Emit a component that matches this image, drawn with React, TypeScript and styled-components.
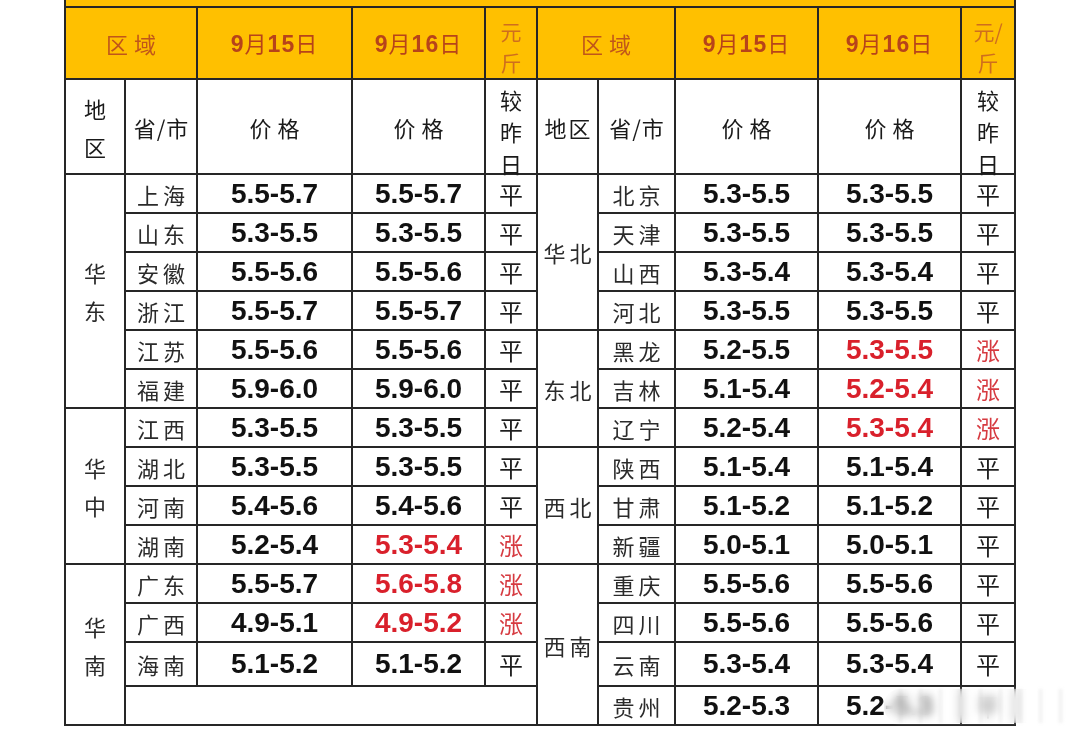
import React from 'react';
import styled, { createGlobalStyle } from 'styled-components';

type Row = {
  region?: { name: string; span: number };
  city: string;
  d15: string;
  d16: string;
  up?: boolean;
};

const left: Row[] = [
  { region: { name: '华东', span: 6 }, city: '上海', d15: '5.5-5.7', d16: '5.5-5.7' },
  { city: '山东', d15: '5.3-5.5', d16: '5.3-5.5' },
  { city: '安徽', d15: '5.5-5.6', d16: '5.5-5.6' },
  { city: '浙江', d15: '5.5-5.7', d16: '5.5-5.7' },
  { city: '江苏', d15: '5.5-5.6', d16: '5.5-5.6' },
  { city: '福建', d15: '5.9-6.0', d16: '5.9-6.0' },
  { region: { name: '华中', span: 4 }, city: '江西', d15: '5.3-5.5', d16: '5.3-5.5' },
  { city: '湖北', d15: '5.3-5.5', d16: '5.3-5.5' },
  { city: '河南', d15: '5.4-5.6', d16: '5.4-5.6' },
  { city: '湖南', d15: '5.2-5.4', d16: '5.3-5.4', up: true },
  { region: { name: '华南', span: 4 }, city: '广东', d15: '5.5-5.7', d16: '5.6-5.8', up: true },
  { city: '广西', d15: '4.9-5.1', d16: '4.9-5.2', up: true },
  { city: '海南', d15: '5.1-5.2', d16: '5.1-5.2' },
];

const right: Row[] = [
  { region: { name: '华北', span: 4 }, city: '北京', d15: '5.3-5.5', d16: '5.3-5.5' },
  { city: '天津', d15: '5.3-5.5', d16: '5.3-5.5' },
  { city: '山西', d15: '5.3-5.4', d16: '5.3-5.4' },
  { city: '河北', d15: '5.3-5.5', d16: '5.3-5.5' },
  { region: { name: '东北', span: 3 }, city: '黑龙', d15: '5.2-5.5', d16: '5.3-5.5', up: true },
  { city: '吉林', d15: '5.1-5.4', d16: '5.2-5.4', up: true },
  { city: '辽宁', d15: '5.2-5.4', d16: '5.3-5.4', up: true },
  { region: { name: '西北', span: 3 }, city: '陕西', d15: '5.1-5.4', d16: '5.1-5.4' },
  { city: '甘肃', d15: '5.1-5.2', d16: '5.1-5.2' },
  { city: '新疆', d15: '5.0-5.1', d16: '5.0-5.1' },
  { region: { name: '西南', span: 4 }, city: '重庆', d15: '5.5-5.6', d16: '5.5-5.6' },
  { city: '四川', d15: '5.5-5.6', d16: '5.5-5.6' },
  { city: '云南', d15: '5.3-5.4', d16: '5.3-5.4' },
  { city: '贵州', d15: '5.2-5.3', d16: '5.2-5.3' },
];

const rowHeights = [39, 39, 39, 39, 39, 39, 39, 39, 39, 39, 39, 39, 44, 39];
const colWidths = [60, 72, 155, 133, 52, 61, 77, 143, 143, 54];

const GlobalStyle = createGlobalStyle`
  html, body {
    margin: 0;
    padding: 0;
    background: #fff;
  }
  body {
    font-family: "Noto Sans CJK SC", "Liberation Serif", serif;
    color: #222;
  }
`;

const Page = styled.div`
  position: relative;
  width: 1080px;
  height: 731px;
  padding-left: 64px;
  box-sizing: border-box;
  overflow: hidden;
  background: #fff;
`;

const Sheet = styled.table`
  border-collapse: collapse;
  table-layout: fixed;
  width: 950px;
`;

const Line = styled.tr<{ $h: number }>`
  height: ${({ $h }) => $h}px;
`;

const Cell = styled.td<{ $fill?: boolean; $open?: boolean }>`
  border: 2px solid #262626;
  border-top: ${({ $open }) => ($open ? 'none' : '2px solid #262626')};
  padding: 0;
  text-align: center;
  vertical-align: middle;
  background: ${({ $fill }) => ($fill ? '#ffc000' : '#fff')};
  line-height: 1;
`;

const Stack = styled.div<{ $gap: number; $shift?: number }>`
  display: flex;
  flex-direction: column;
  align-items: center;
  gap: ${({ $gap }) => $gap}px;
  transform: translateY(${({ $shift = 0 }) => $shift}px);
`;

const AreaLabel = styled.span`
  color: #c0561a;
  font-size: 22px;
  font-weight: 400;
  letter-spacing: 6px;
  margin-right: -6px;
`;

const UnitLabel = styled.span`
  color: #cf6e1e;
  font-size: 21px;
  font-weight: 400;
`;

const DateLabel = styled.span`
  color: #b7431a;
  font-family: "Liberation Sans", "Noto Sans CJK SC", sans-serif;
  font-weight: bold;
  font-size: 23px;
  letter-spacing: 1px;

  & > i {
    font-style: normal;
    font-family: "Noto Sans CJK SC", sans-serif;
    font-weight: 400;
    font-size: 22px;
  }
`;

const HeadText = styled.span<{ $spacing?: number }>`
  font-size: 22px;
  font-weight: 400;
  color: #1a1a1a;
  letter-spacing: ${({ $spacing = 4 }) => $spacing}px;
  margin-right: ${({ $spacing = 4 }) => -$spacing}px;
`;

const Place = styled.span`
  font-size: 22px;
  font-weight: 400;
  color: #2b2b2b;
  letter-spacing: 4px;
  margin-right: -4px;
`;

const Price = styled.span<{ $up?: boolean }>`
  display: inline-block;
  font-family: "Liberation Sans", Arial, sans-serif;
  font-weight: bold;
  font-size: 28px;
  color: ${({ $up }) => ($up ? '#d9202b' : '#111')};
`;

const Trend = styled.span<{ $up?: boolean }>`
  font-size: 24px;
  font-weight: 400;
  color: ${({ $up }) => ($up ? '#d63a40' : '#1e1e1e')};
`;

/* blurred site watermark lying over the last row */
const Watermark = styled.div`
  position: absolute;
  left: 884px;
  top: 689px;
  width: 192px;
  height: 34px;
  border-radius: 16px;
  background:
    linear-gradient(rgba(255, 255, 255, 0.45), rgba(255, 255, 255, 0.45)),
    repeating-linear-gradient(
      90deg,
      rgba(90, 90, 90, 0) 0px,
      rgba(90, 90, 90, 0) 14px,
      rgba(90, 90, 90, 0.18) 16px,
      rgba(90, 90, 90, 0) 20px
    );
  backdrop-filter: blur(4px);
  filter: blur(1.5px);
`;

const Chars = ({ text, gap, shift }: { text: string; gap: number; shift?: number }) => (
  <Stack $gap={gap} $shift={shift}>
    {text.split('').map((c, i) => (
      <span key={i}>{c}</span>
    ))}
  </Stack>
);

const DateHead = ({ day }: { day: string }) => (
  <DateLabel>
    9<i>月</i>
    {day}
    <i>日</i>
  </DateLabel>
);

const HalfCells = ({ row, stacked }: { row?: Row; stacked: boolean }) => {
  if (!row) return null;
  return (
    <>
      {row.region && (
        <Cell rowSpan={row.region.span}>
          {stacked ? (
            <Place as="div">
              <Chars text={row.region.name} gap={16} />
            </Place>
          ) : (
            <Place>{row.region.name}</Place>
          )}
        </Cell>
      )}
      <Cell>
        <Place>{row.city}</Place>
      </Cell>
      <Cell>
        <Price>{row.d15}</Price>
      </Cell>
      <Cell>
        <Price $up={row.up}>{row.d16}</Price>
      </Cell>
      <Cell>
        <Trend $up={row.up}>{row.up ? '涨' : '平'}</Trend>
      </Cell>
    </>
  );
};

export default function App() {
  return (
    <Page>
      <GlobalStyle />
      <Sheet>
        <colgroup>
          {colWidths.map((w, i) => (
            <col key={i} style={{ width: w }} />
          ))}
        </colgroup>
        <tbody>
          <Line $h={7}>
            <Cell $fill $open colSpan={10} />
          </Line>
          <Line $h={72}>
            <Cell $fill colSpan={2}>
              <AreaLabel>区域</AreaLabel>
            </Cell>
            <Cell $fill>
              <DateHead day="15" />
            </Cell>
            <Cell $fill>
              <DateHead day="16" />
            </Cell>
            <Cell $fill>
              <UnitLabel as="div">
                <Chars text="元斤" gap={10} shift={4} />
              </UnitLabel>
            </Cell>
            <Cell $fill colSpan={2}>
              <AreaLabel>区域</AreaLabel>
            </Cell>
            <Cell $fill>
              <DateHead day="15" />
            </Cell>
            <Cell $fill>
              <DateHead day="16" />
            </Cell>
            <Cell $fill>
              <UnitLabel as="div">
                <Stack $gap={10} $shift={4}>
                  <span>元/</span>
                  <span>斤</span>
                </Stack>
              </UnitLabel>
            </Cell>
          </Line>
          <Line $h={95}>
            <Cell>
              <HeadText as="div">
                <Chars text="地区" gap={16} />
              </HeadText>
            </Cell>
            <Cell>
              <HeadText $spacing={1}>省/市</HeadText>
            </Cell>
            <Cell>
              <HeadText $spacing={6}>价格</HeadText>
            </Cell>
            <Cell>
              <HeadText $spacing={6}>价格</HeadText>
            </Cell>
            <Cell>
              <HeadText as="div">
                <Chars text="较昨日" gap={10} shift={4} />
              </HeadText>
            </Cell>
            <Cell>
              <HeadText $spacing={2}>地区</HeadText>
            </Cell>
            <Cell>
              <HeadText $spacing={1}>省/市</HeadText>
            </Cell>
            <Cell>
              <HeadText $spacing={6}>价格</HeadText>
            </Cell>
            <Cell>
              <HeadText $spacing={6}>价格</HeadText>
            </Cell>
            <Cell>
              <HeadText as="div">
                <Chars text="较昨日" gap={10} shift={4} />
              </HeadText>
            </Cell>
          </Line>
          {rowHeights.map((h, i) => (
            <Line key={i} $h={h}>
              {i < left.length ? (
                <HalfCells row={left[i]} stacked />
              ) : (
                <Cell colSpan={4} />
              )}
              <HalfCells row={right[i]} stacked={false} />
            </Line>
          ))}
        </tbody>
      </Sheet>
      <Watermark />
    </Page>
  );
}
